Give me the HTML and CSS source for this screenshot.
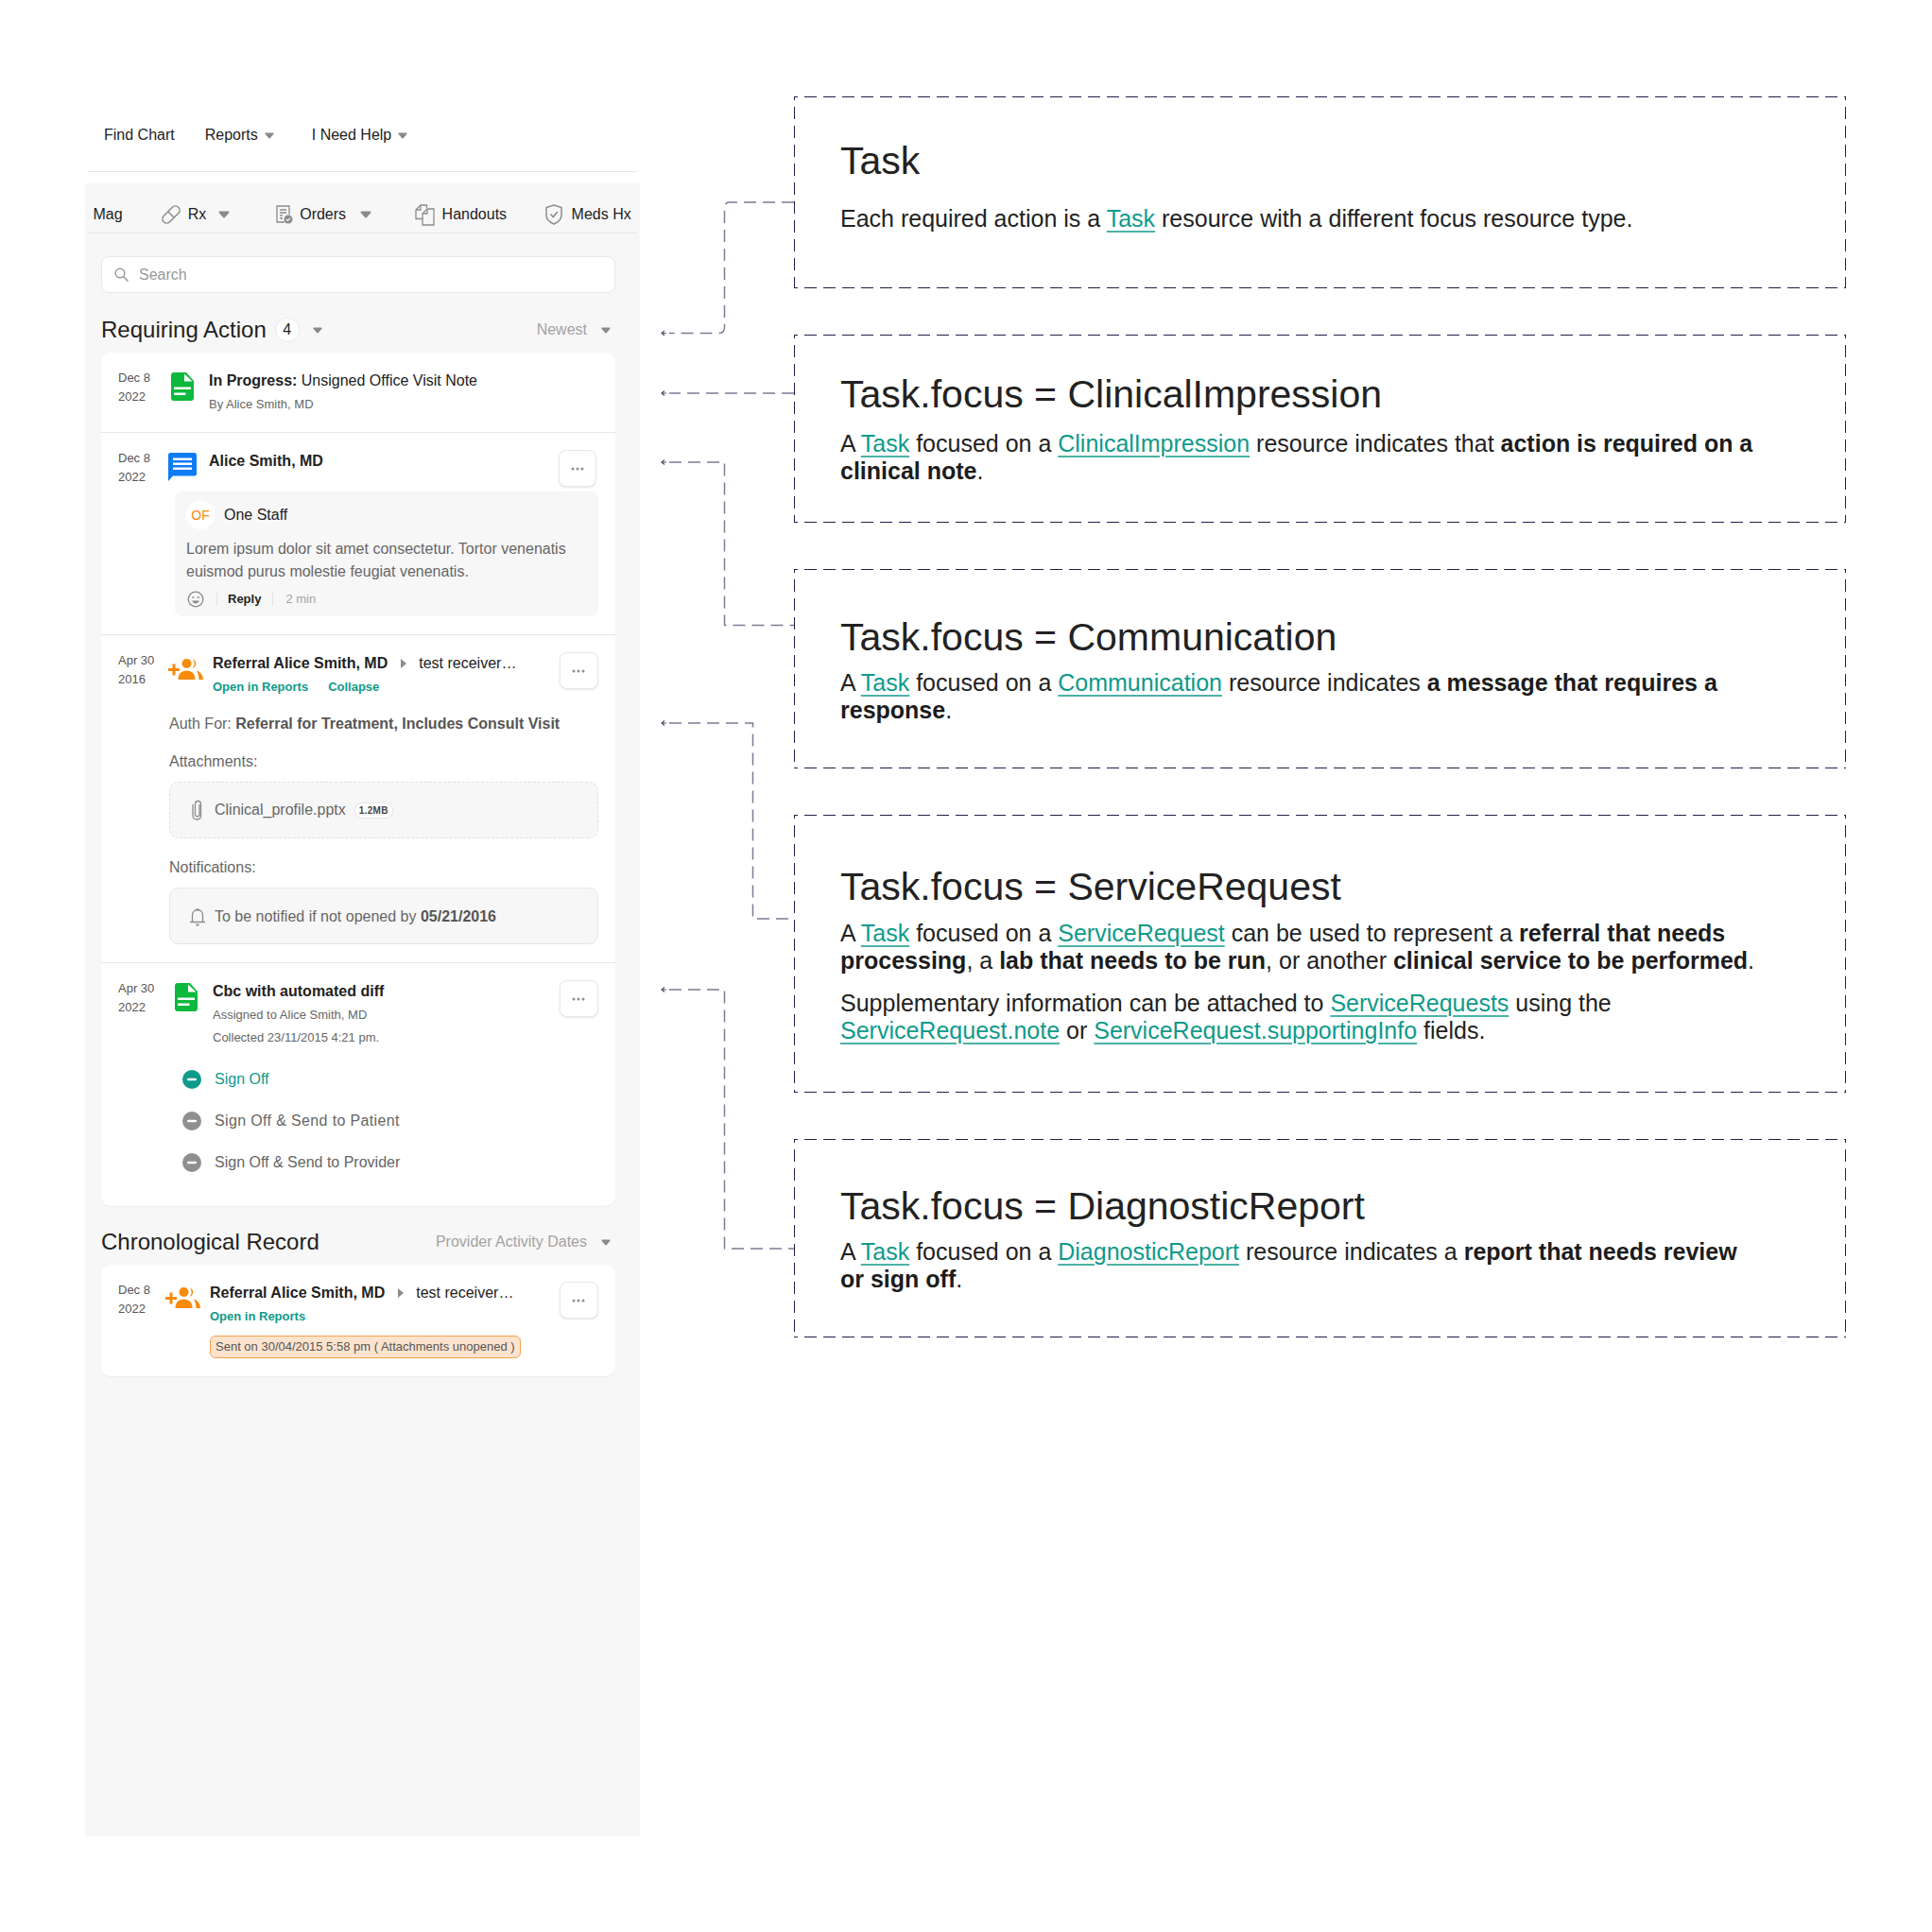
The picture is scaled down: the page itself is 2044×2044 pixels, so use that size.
FILE: index.html
```html
<!DOCTYPE html>
<html lang="en">
<head>
    <meta charset="UTF-8">
    <title>Task focus resource types</title>
    <link rel="stylesheet" href="styles.css">
</head>
<body>
    <svg class="defs" xmlns="http://www.w3.org/2000/svg">
        <symbol id="caret" viewBox="0 0 12 8"><path d="M1.5 1.5h9L6 6.5z" fill="#8a8a8a" stroke="#8a8a8a" stroke-width="2" stroke-linejoin="round"/></symbol>
        <symbol id="doc" viewBox="0 0 24 30"><path d="M3 0h13l8 9v18a3 3 0 0 1-3 3H3a3 3 0 0 1-3-3V3a3 3 0 0 1 3-3z" fill="#0cb93c"/><path d="M14 1.500v8h8.500z" fill="#fff"/><path d="M3 15.500h18v2.500H3zM3 21.500h12.500v2.500H3z" fill="#fff"/></symbol>
        <symbol id="chat" viewBox="0 0 30 30"><path d="M2.500 0h25a2.500 2.500 0 0 1 2.500 2.500V22a2.500 2.500 0 0 1-2.500 2.500H5L0 30V2.500A2.500 2.500 0 0 1 2.500 0z" fill="#0d7cf2"/><path d="M5 5.500h20V8H5zM5 10.500h20V13H5zM5 15.500h20V18H5z" fill="#fff"/></symbol>
        <symbol id="referral" viewBox="0 0 37 22"><g fill="#f88a0c"><path d="M0 10h4.500V5.500h3V10H12v3H7.500v4.500h-3V13H0z"/><circle cx="19.500" cy="5" r="5"/><path d="M10.500 22c0-6 3.500-9.500 9-9.500s9 3.500 9 9.500z"/><path d="M26 0.500a5 5 0 0 1 0 9.300 8 8 0 0 0 0-9.300z"/><path d="M30 12.500c4 1 6.500 4.500 7 9.500h-4.500c-.2-4-.8-6.500-2.500-9.500z"/></g></symbol>
        <symbol id="pill" viewBox="0 0 20 20"><g fill="none" stroke="#8c8c8c" stroke-width="1.500"><rect x="-1" y="5.500" width="22" height="9" rx="4.500" transform="rotate(-45 10 10)"/><path d="M6.800 6.800l6.400 6.400"/></g></symbol>
        <symbol id="orders" viewBox="0 0 18 20"><g fill="none" stroke="#8c8c8c" stroke-width="1.300"><path d="M9 18H1V1h13v9"/><path d="M4 5h7M4 8h7M4 11h3M4 14h3"/></g><circle cx="13" cy="15" r="4.500" fill="#8c8c8c"/><path d="M11 15l1.500 1.500 2.500-2.800" fill="none" stroke="#fff" stroke-width="1.100"/></symbol>
        <symbol id="handouts" viewBox="0 0 21 23"><g fill="none" stroke="#8c8c8c" stroke-width="1.300"><path d="M8 15.500H1V6l5-5h6.500v3"/><path d="M1 6h5V1"/><path d="M20 5v17H8V10l5-5z"/><path d="M8 10h5V5"/></g></symbol>
        <symbol id="shield" viewBox="0 0 18 22"><path d="M9 1l8 2.500V12c0 4-3.500 7-8 9-4.500-2-8-5-8-9V3.500z" fill="none" stroke="#8c8c8c" stroke-width="1.500"/><path d="M5.500 10.500l2.800 3 4.500-5.500" fill="none" stroke="#8c8c8c" stroke-width="1.500"/></symbol>
        <symbol id="search" viewBox="0 0 15 15"><circle cx="6" cy="6" r="4.800" fill="none" stroke="#999" stroke-width="1.500"/><path d="M9.500 9.500l5 5" stroke="#999" stroke-width="1.500"/></symbol>
        <symbol id="dots" viewBox="0 0 14 4"><g fill="#8f8f8f"><circle cx="2" cy="2" r="1.500"/><circle cx="7" cy="2" r="1.500"/><circle cx="12" cy="2" r="1.500"/></g></symbol>
        <symbol id="smile" viewBox="0 0 18 18"><circle cx="9" cy="9" r="7.800" fill="none" stroke="#8c8c8c" stroke-width="1.300"/><circle cx="6.300" cy="7" r="1.100" fill="#8c8c8c"/><circle cx="11.700" cy="7" r="1.100" fill="#8c8c8c"/><path d="M5.300 10.500h7.400c-.5 2-2 3-3.700 3s-3.200-1-3.700-3z" fill="#8c8c8c"/></symbol>
        <symbol id="clip" viewBox="0 0 12 22"><path d="M8 5v11a2.300 2.300 0 0 1-4.500 0V4.500a3 3 0 0 1 6 0V16a4 4 0 0 1-4 5 4.300 4.300 0 0 1-4.500-5V5" fill="none" stroke="#8c8c8c" stroke-width="1.300"/></symbol>
        <symbol id="bell" viewBox="0 0 16 20"><path d="M2.500 15.500V8a5.500 5.500 0 0 1 11 0v7.500" fill="none" stroke="#8c8c8c" stroke-width="1.300"/><path d="M0 15.500h16" stroke="#8c8c8c" stroke-width="1.500"/><path d="M6.500 2.500h3M6.500 18.500h3" stroke="#8c8c8c" stroke-width="2"/></symbol>
        <symbol id="minus" viewBox="0 0 20 20"><circle cx="10" cy="10" r="10" fill="currentColor"/><rect x="5" y="8.800" width="10" height="2.400" rx="1" fill="#fff"/></symbol>
    </svg>

    <div class="page">
        <div class="chart">
            <div class="topnav">
                <span class="topnav-item">Find Chart</span>
                <span class="topnav-item">Reports <svg class="caret small"><use href="#caret"/></svg></span>
                <span class="topnav-item">I Need Help <svg class="caret small"><use href="#caret"/></svg></span>
            </div>
            <div class="panel">
                <div class="toolbar">
                    <span class="tool">Mag</span>
                    <span class="tool tool-rx"><svg class="tool-icon pill"><use href="#pill"/></svg>Rx<svg class="caret"><use href="#caret"/></svg></span>
                    <span class="tool tool-orders"><svg class="tool-icon orders"><use href="#orders"/></svg>Orders<svg class="caret"><use href="#caret"/></svg></span>
                    <span class="tool tool-handouts"><svg class="tool-icon handouts"><use href="#handouts"/></svg>Handouts</span>
                    <span class="tool tool-meds"><svg class="tool-icon shield"><use href="#shield"/></svg>Meds Hx</span>
                </div>
                <div class="content">
                    <div class="search"><svg class="search-icon"><use href="#search"/></svg>Search</div>

                    <div class="section-head">
                        <h2>Requiring Action</h2>
                        <span class="count">4</span>
                        <svg class="caret small"><use href="#caret"/></svg>
                        <span class="sort">Newest <svg class="caret small"><use href="#caret"/></svg></span>
                    </div>
                    <div class="card">
                        <div class="row row-first">
                            <div class="head">
                                <div class="date">Dec 8<br>2022</div>
                                <svg class="icon doc"><use href="#doc"/></svg>
                                <div class="main main-near">
                                    <div class="title"><b>In Progress:</b> Unsigned Office Visit Note</div>
                                    <div class="sub">By Alice Smith, MD</div>
                                </div>
                            </div>
                        </div>
                        <div class="row row-msg">
                            <div class="head">
                                <div class="date">Dec 8<br>2022</div>
                                <svg class="icon chat"><use href="#chat"/></svg>
                                <div class="main main-near">
                                    <div class="title"><b>Alice Smith, MD</b></div>
                                </div>
                                <button class="more more-tight"><svg class="dots"><use href="#dots"/></svg></button>
                            </div>
                            <div class="comment">
                                <div class="comment-author"><span class="avatar">OF</span>One Staff</div>
                                <p class="comment-text">Lorem ipsum dolor sit amet consectetur. Tortor venenatis euismod purus molestie feugiat venenatis.</p>
                                <div class="comment-foot">
                                    <svg class="smile"><use href="#smile"/></svg>
                                    <b class="reply">Reply</b>
                                    <span class="ago">2 min</span>
                                </div>
                            </div>
                        </div>
                        <div class="row row-referral">
                            <div class="head">
                                <div class="date">Apr 30<br>2016</div>
                                <svg class="icon referral"><use href="#referral"/></svg>
                                <div class="main">
                                    <div class="title"><b>Referral Alice Smith, MD</b><span class="arrow"></span>test receiver…</div>
                                    <div class="links"><a>Open in Reports</a><a>Collapse</a></div>
                                </div>
                                <button class="more"><svg class="dots"><use href="#dots"/></svg></button>
                            </div>
                            <div class="detail">
                                <div class="label label-auth">Auth For: <b>Referral for Treatment, Includes Consult Visit</b></div>
                                <div class="label">Attachments:</div>
                                <div class="well well-dashed">
                                    <svg class="well-icon"><use href="#clip"/></svg>Clinical_profile.pptx<span class="size">1.2MB</span>
                                </div>
                                <div class="label label-notify">Notifications:</div>
                                <div class="well well-solid">
                                    <svg class="well-icon"><use href="#bell"/></svg><span>To be notified if not opened by <b>05/21/2016</b></span>
                                </div>
                            </div>
                        </div>
                        <div class="row row-report">
                            <div class="head">
                                <div class="date">Apr 30<br>2022</div>
                                <svg class="icon doc doc-inset"><use href="#doc"/></svg>
                                <div class="main">
                                    <div class="title"><b>Cbc with automated diff</b></div>
                                    <div class="sub">Assigned to Alice Smith, MD</div>
                                    <div class="sub sub-next">Collected 23/11/2015 4:21 pm.</div>
                                </div>
                                <button class="more"><svg class="dots"><use href="#dots"/></svg></button>
                            </div>
                            <ul class="actions">
                                <li class="action-on"><svg class="minus"><use href="#minus"/></svg>Sign Off</li>
                                <li class="action-wide"><svg class="minus"><use href="#minus"/></svg>Sign Off &amp; Send to Patient</li>
                                <li><svg class="minus"><use href="#minus"/></svg>Sign Off &amp; Send to Provider</li>
                            </ul>
                        </div>
                    </div>

                    <div class="section-head section-second">
                        <h2>Chronological Record</h2>
                        <span class="sort">Provider Activity Dates <svg class="caret small"><use href="#caret"/></svg></span>
                    </div>
                    <div class="card">
                        <div class="row row-chrono">
                            <div class="head">
                                <div class="date date-narrow">Dec 8<br>2022</div>
                                <svg class="icon referral"><use href="#referral"/></svg>
                                <div class="main">
                                    <div class="title"><b>Referral Alice Smith, MD</b><span class="arrow"></span>test receiver…</div>
                                    <div class="links"><a>Open in Reports</a></div>
                                    <div class="sent">Sent on 30/04/2015 5:58 pm ( Attachments unopened )</div>
                                </div>
                                <button class="more"><svg class="dots"><use href="#dots"/></svg></button>
                            </div>
                        </div>
                    </div>
                </div>
            </div>
        </div>

        <div class="notes">
            <section class="box box-task">
                <h1>Task</h1>
                <p>Each required action is a <a>Task</a> resource with a different focus resource type.</p>
            </section>
            <section class="box box-impression">
                <h1>Task.focus = ClinicalImpression</h1>
                <p>A <a>Task</a> focused on a <a>ClinicalImpression</a> resource indicates that <b>action is required on a clinical note</b>.</p>
            </section>
            <section class="box box-communication">
                <h1>Task.focus = Communication</h1>
                <p>A <a>Task</a> focused on a <a>Communication</a> resource indicates <b>a message that requires a response</b>.</p>
            </section>
            <section class="box box-service">
                <h1>Task.focus = ServiceRequest</h1>
                <p>A <a>Task</a> focused on a <a>ServiceRequest</a> can be used to represent a <b>referral that needs processing</b>, a <b>lab that needs to be run</b>, or another <b>clinical service to be performed</b>.</p>
                <p>Supplementary information can be attached to <a>ServiceRequests</a> using the <a>ServiceRequest.note</a> or <a>ServiceRequest.supportingInfo</a> fields.</p>
            </section>
            <section class="box box-report">
                <h1>Task.focus = DiagnosticReport</h1>
                <p>A <a>Task</a> focused on a <a>DiagnosticReport</a> resource indicates a <b>report that needs review or sign off</b>.</p>
            </section>
        </div>
    </div>

    <!-- connectors between the notes and the rows -->
    <svg class="connectors" xmlns="http://www.w3.org/2000/svg" viewBox="0 0 2044 1500">
        <g class="wire">
            <path d="M840 214H772a5 5 0 0 0-5.500 5.500V347a5.500 5.500 0 0 1-5.500 5.500H708"/>
            <path d="M840 416H708"/>
            <path d="M708 489H766.500V661.500H840"/>
            <path d="M708 765H796.500V972H840"/>
            <path d="M708 1047H766.500V1321H840"/>
        </g>
        <g class="heads">
            <path d="M703 350l-3 2.500 3 2.500M700 352.500h5"/>
            <path d="M703 413.500l-3 2.500 3 2.500M700 416h5"/>
            <path d="M703 486.500l-3 2.500 3 2.500M700 489h5"/>
            <path d="M703 762.500l-3 2.500 3 2.500M700 765h5"/>
            <path d="M703 1044.500l-3 2.500 3 2.500M700 1047h5"/>
        </g>
    </svg>
</body>
</html>
```

FILE: styles.css
```css
* {
    box-sizing: border-box;
}
body {
    margin: 0;
    background: #fff;
    color: #222;
    font-family: "Liberation Sans", Arial, sans-serif;
    font-size: 16px;
}
.defs {
    display: none;
}
.page {
    display: flex;
    gap: 163px;
    padding-left: 90px;
    min-height: 2044px;
}

/* left: the chart screen */
.chart {
    width: 587px;
    flex: none;
}
.topnav {
    display: flex;
    align-items: center;
    height: 182px;
    margin: 0 3px;
    padding: 105px 0 0 17px;
    gap: 32px;
    border-bottom: 1px solid #e8e8e8;
}
.topnav-item {
    display: flex;
    align-items: center;
    gap: 7px;
}
.topnav-item:nth-child(3) {
    margin-left: 8px;
}
.caret {
    width: 12px;
    height: 8px;
}
.caret.small {
    width: 10px;
    height: 7px;
}
.panel {
    margin-top: 12px;
    min-height: 1749px;
    background: #f7f7f7;
}
.toolbar {
    display: flex;
    align-items: center;
    margin: 0 3px;
    padding: 23px 0 9px 5.5px;
    height: 53px;
    border-bottom: 1px solid #e6e6e6;
}
.tool {
    display: flex;
    align-items: center;
    line-height: 20px;
}
.tool-icon {
    margin-right: 8px;
}
.tool .caret {
    margin-left: 13px;
}
.tool-rx {
    margin-left: 41px;
}
.tool-orders {
    margin-left: 49px;
}
.tool-orders .caret {
    margin-left: 14.5px;
}
.tool-handouts {
    margin-left: 46px;
}
.tool-meds {
    margin-left: 41px;
}
.pill {
    width: 20px;
    height: 20px;
}
.orders {
    width: 18px;
    height: 20px;
    margin-right: 7px;
}
.handouts {
    width: 21px;
    height: 23px;
}
.shield {
    width: 18px;
    height: 22px;
    margin-right: 9.5px;
}
.content {
    padding: 24px 26px 0 17px;
}
.search {
    display: flex;
    align-items: center;
    height: 39px;
    padding-left: 13px;
    background: #fff;
    border: 1px solid #e8e8e8;
    border-radius: 8px;
    color: #999;
}
.search-icon {
    width: 15px;
    height: 15px;
    margin-right: 11px;
}
.section-head {
    display: flex;
    align-items: center;
    height: 30px;
    margin: 24px 0 9px;
    padding-right: 5px;
}
.section-second {
    margin-top: 23px;
}
h2 {
    margin: 0;
    font-size: 24px;
    font-weight: 400;
}
.count {
    display: flex;
    align-items: center;
    justify-content: center;
    width: 26px;
    height: 26px;
    margin: 0 14px 0 9px;
    background: #fff;
    border: 1px solid #eaeaea;
    border-radius: 50%;
}
.sort {
    display: flex;
    align-items: center;
    gap: 15px;
    margin-left: auto;
    color: #a3a3a3;
}
.card {
    background: #fff;
    border-radius: 10px;
    box-shadow: 0 1px 1px rgba(0,0,0,0.05);
}
.row {
    padding: 17px 18.5px 0 18px;
    border-bottom: 1px solid #e8e8e8;
}
.row:last-child {
    border-bottom: none;
}
.row-first {
    height: 85px;
}
.row-msg {
    height: 214px;
}
.row-referral {
    height: 347px;
}
.row-report {
    height: 257px;
}
.row-chrono {
    height: 118px;
}
.head {
    display: flex;
    align-items: flex-start;
}
.date {
    width: 53px;
    flex: none;
    font-size: 13px;
    line-height: 20px;
    color: #555;
}
.date-narrow {
    width: 50px;
}
.icon {
    flex: none;
    margin-top: 4px;
}
.doc {
    width: 24px;
    height: 30px;
    margin-left: 3px;
}
.doc-inset {
    margin-left: 7px;
}
.chat {
    width: 30px;
    height: 30px;
}
.referral {
    width: 37px;
    height: 22px;
    margin-top: 8px;
}
.row-chrono .referral {
    margin-top: 7px;
}
.main {
    flex: 1;
    margin-left: 10px;
    padding-top: 3px;
    min-width: 0;
}
.main-near {
    margin-left: 16px;
}
.doc-inset + .main {
    margin-left: 16px;
}
.row-msg .main-near {
    margin-left: 13px;
}
.title {
    font-size: 16px;
    line-height: 20px;
    color: #222;
}
.sub {
    margin-top: 3px;
    font-size: 13px;
    line-height: 24px;
    color: #666;
}
.sub-next {
    margin-top: 0;
}
.arrow {
    display: inline-block;
    width: 0;
    height: 0;
    margin: 0 13px 0 14px;
    border-left: 6px solid #8c8c8c;
    border-top: 5px solid transparent;
    border-bottom: 5px solid transparent;
}
.links {
    margin-top: 5px;
    font-size: 13px;
    font-weight: 700;
    line-height: 20px;
    color: #0f9a8a;
}
.links a + a {
    margin-left: 21px;
}
.more {
    display: flex;
    align-items: center;
    justify-content: center;
    flex: none;
    width: 41px;
    height: 39px;
    margin-top: 1px;
    padding: 0;
    background: #fff;
    border: 1px solid #e8e8e8;
    border-radius: 8px;
    box-shadow: 0 1px 2px rgba(0,0,0,0.1);
}
.more-tight {
    width: 40px;
    margin-top: 1px;
    margin-right: 2px;
}
.dots {
    width: 14px;
    height: 4px;
}
.comment {
    height: 132px;
    margin: 5px 0 0 60px;
    padding: 10px 12px 0;
    background: #f7f7f7;
    border-radius: 8px;
}
.comment-author {
    display: flex;
    align-items: center;
    height: 30px;
}
.avatar {
    display: flex;
    align-items: center;
    justify-content: center;
    width: 30px;
    height: 30px;
    margin-right: 10px;
    background: #fff;
    border-radius: 50%;
    color: #f88a0c;
    font-size: 14px;
}
.comment-text {
    margin: 9px 0 0;
    line-height: 24px;
    color: #666;
}
.comment-foot {
    display: flex;
    align-items: center;
    height: 20px;
    margin-top: 7px;
    font-size: 13px;
}
.smile {
    width: 18px;
    height: 18px;
    margin-left: 1px;
}
.reply {
    margin-left: 13px;
    padding-left: 11px;
    border-left: 1px solid #e4e4e4;
    line-height: 14px;
}
.ago {
    margin-left: 12px;
    padding-left: 13px;
    border-left: 1px solid #e4e4e4;
    line-height: 14px;
    color: #a3a3a3;
}
.detail {
    margin: 19px 0 0 54px;
}
.label {
    margin-top: 20px;
    line-height: 20px;
    color: #666;
}
.label-auth {
    margin-top: 0;
}
.label-notify {
    margin-top: 21px;
}
.label-auth b,
.well b {
    color: #555;
}
.well {
    display: flex;
    align-items: center;
    height: 60px;
    margin-top: 11px;
    padding-left: 21px;
    background: #f7f7f7;
    border-radius: 10px;
    color: #666;
}
.well-dashed {
    border: 1px dashed #e0e0e0;
}
.well-solid {
    padding-top: 2px;
    border: 1px solid #e6e6e6;
}
.well-icon {
    width: 16px;
    height: 22px;
    margin-right: 10px;
}
.size {
    margin-left: 9px;
    padding: 0 4px;
    line-height: 15px;
    font-size: 10px;
    font-weight: 700;
    letter-spacing: 0.3px;
    color: #444;
    background: #fff;
    border: 1px solid #e6e6e6;
    border-radius: 8px;
}
.actions {
    margin: 10px 0 0;
    padding: 0 0 0 68px;
    list-style: none;
    color: #666;
}
.actions li {
    display: flex;
    align-items: center;
    height: 44px;
}
.action-wide {
    letter-spacing: 0.36px;
}
.minus {
    width: 20px;
    height: 20px;
    margin-right: 14px;
    color: #8f8f8f;
}
.action-on {
    color: #0f9a8a;
}
.action-on .minus {
    color: #0f9a8a;
}
.sent {
    display: inline-block;
    margin-top: 10px;
    padding: 0 5px;
    height: 24px;
    line-height: 22px;
    font-size: 13px;
    color: #555;
    background: #fde3cd;
    border: 1px solid #f6a24d;
    border-radius: 6px;
}

/* right: explanation boxes */
.notes {
    width: 1113px;
    flex: none;
    padding-top: 102px;
}
.box {
    --dash: #20204a;
    padding: 0 90px 0 49px;
    margin-bottom: 49px;
    background-image:
        linear-gradient(to right, var(--dash) 13px, transparent 13px),
        linear-gradient(to right, var(--dash) 13px, transparent 13px),
        linear-gradient(to bottom, var(--dash) 13px, transparent 13px),
        linear-gradient(to bottom, var(--dash) 13px, transparent 13px);
    background-size: 20px 1px, 20px 1px, 1px 20px, 1px 20px;
    background-repeat: repeat-x, repeat-x, repeat-y, repeat-y;
    background-position: -9px 0, -9px 100%, 0 -9px, 100% -9px;
}
h1 {
    margin: 0;
    font-size: 41px;
    font-weight: 400;
    line-height: 48px;
    color: #222;
}
.box p {
    margin: 0;
    font-size: 25px;
    line-height: 29px;
    color: #222;
}
.box p + p {
    margin-top: 16px;
}
.box a {
    color: #0f9a8a;
    text-decoration: underline;
    text-decoration-color: rgba(15,154,138,0.75);
    text-decoration-thickness: 1.5px;
    text-underline-offset: 4px;
}
.box b {
    color: #1c1c1c;
}
.box-task {
    height: 203px;
    padding-top: 44px;
}
.box-task p {
    margin-top: 23px;
}
.box-impression {
    height: 199px;
    padding-top: 39px;
}
.box-impression p {
    margin-top: 14px;
}
.box-communication {
    height: 211px;
    padding-top: 48px;
}
.box-communication p:first-of-type {
    margin-top: 10px;
}
.box-service {
    height: 294px;
    padding-top: 52px;
}
.box-service p:first-of-type {
    margin-top: 11px;
}
.box-report {
    height: 210px;
    padding-top: 47px;
}
.box-report p {
    margin-top: 10px;
}

.connectors {
    position: absolute;
    top: 0;
    left: 0;
    width: 2044px;
    height: 1500px;
    pointer-events: none;
}
.wire {
    fill: none;
    stroke: #7c7c95;
    stroke-width: 1.5;
    stroke-dasharray: 13 7;
}
.heads {
    fill: none;
    stroke: #55556f;
    stroke-width: 1.2;
}
```
